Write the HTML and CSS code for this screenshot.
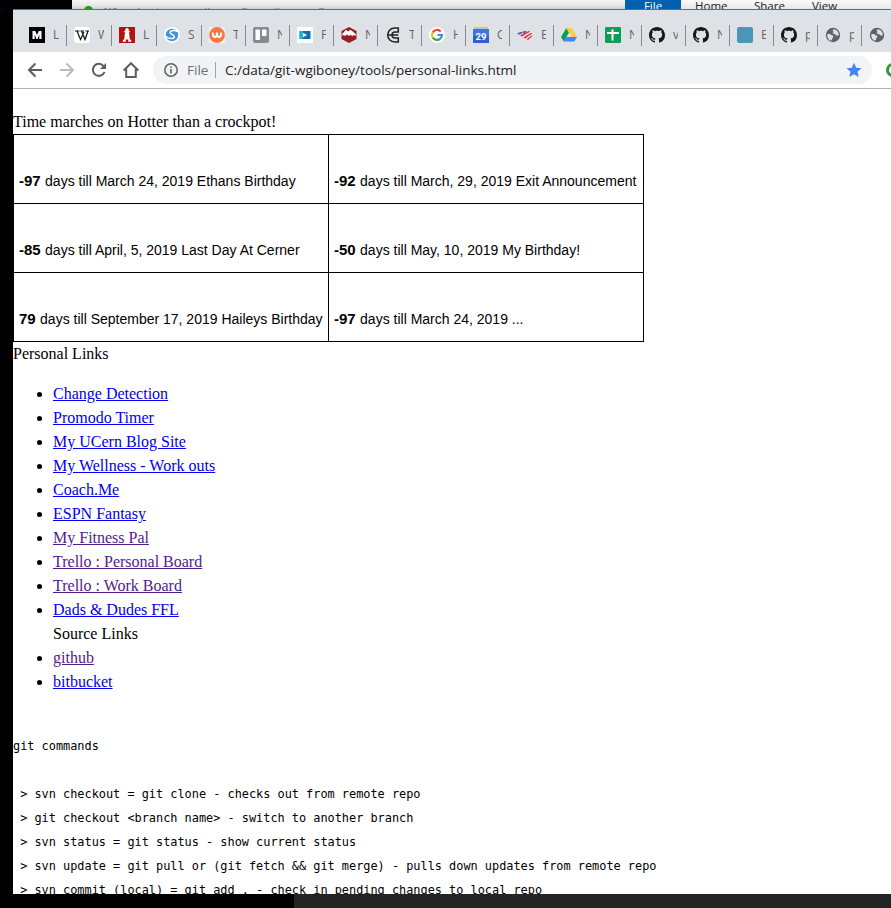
FILE: index.html
```
<!DOCTYPE html>
<html lang="en"><head><meta charset="utf-8"><title>Personal Links</title>
<link rel="stylesheet" href="styles.css"></head>
<body>
<svg class="defs" width="0" height="0"><defs>
<symbol id="gh" viewBox="0 0 16 16"><path fill="#171717" d="M8 0C3.58 0 0 3.58 0 8c0 3.54 2.29 6.53 5.47 7.59.4.07.55-.17.55-.38 0-.19-.01-.82-.01-1.49-2.01.37-2.53-.49-2.69-.94-.09-.23-.48-.94-.82-1.13-.28-.15-.68-.52-.01-.53.63-.01 1.08.58 1.23.82.72 1.21 1.87.87 2.33.66.07-.52.28-.87.51-1.07-1.78-.2-3.64-.89-3.64-3.95 0-.87.31-1.59.82-2.15-.08-.2-.36-1.02.08-2.12 0 0 .67-.21 2.2.82.64-.18 1.32-.27 2-.27s1.36.09 2 .27c1.53-1.04 2.2-.82 2.2-.82.44 1.1.16 1.92.08 2.12.51.56.82 1.27.82 2.15 0 3.07-1.87 3.75-3.65 3.95.29.25.54.73.54 1.48 0 1.07-.01 1.93-.01 2.2 0 .21.15.46.55.38A8.01 8.01 0 0 0 16 8c0-4.42-3.58-8-8-8z"/></symbol>
<symbol id="globe" viewBox="0 0 16 16"><circle cx="8" cy="8" r="7.2" fill="#5f6368"/><path fill="#dee1e6" d="M2.200 7.200C4 6.600 5.600 7 6.400 8.200c1 .2 2 .2 2 1.400 0 1-1 1.200-1.200 2.200-.1 1-.8 1.800-1.400 2C3.600 12.800 2 10.600 2.200 7.200zM8.800 2.200c-1.200.6-1.600 1.800-.6 2.200 1 .3.200 1.200-.6 1.400-.6.600.400 1 1.400 1 1.400 0 1.400 1.400 2.400 1.600.8.100 1.400.3 2.400-.2C13.900 5.200 11.800 2.500 8.800 2.200z"/></symbol>
</defs></svg>
<div class="backdrop">
  <div class="behind"><svg class="dot" width="260" height="9"><circle cx="5.500" cy="10.500" r="4.500" fill="#189a1b"/><path d="M21 8.500h3M26 8.500h2M30 8.500h4M55 8.500h2M74 8.500h1M122 8.500h1.500M125 8.500h1.500M159 8.500h5M192 8.500h1.500M195 8.500h1.500M236 8.500h5" stroke="#999" fill="none"/></svg></div>
  <div class="explorer"><span class="file">File</span><span class="m1">Home</span><span class="m2">Share</span><span class="m3">View</span></div>
</div>
<div class="window">
  <div class="tabs">
    <div class="tab wide"><svg viewBox="0 0 16 16"><path d="M0 0h16v16H0z"/><path d="M3.500 12V4h2.700L8 8l1.800-4h2.700v8h-2.200V7.500L8.600 12H7.400L5.700 7.500V12z" fill="#fff"/></svg><span>L</span></div>
    <div class="tab wide"><svg viewBox="0 0 16 16"><rect width="16" height="16" rx="3" fill="#fff"/><path d="M1 4h4.500M6.500 4H10M11.500 4H15M3 4l3.500 8.500L10 5M7.500 4l3.500 8.500L14 4" fill="none" stroke="#111" stroke-width="1.200"/></svg><span>W</span></div>
    <div class="tab wide"><svg viewBox="0 0 16 16"><path d="M0 0h16v16H0z" fill="#b5130f"/><path d="M8 .8L9.800 2.300V4h1v1.200H10l.8 7 1.400 1v1.600H9.200V12.500H6.800v2.300H3.800v-1.600l1.400-1 .8-7H5.200V4h1V2.300z" fill="#fff"/></svg><span>L</span></div>
    <div class="tab wide"><svg viewBox="0 0 16 16"><circle cx="8" cy="8" r="8" fill="#fff"/><circle cx="8" cy="8" r="6.200" fill="#3f94dc"/><path d="M14 4.500C10.500 2.800 6.500 3.400 6 5.300c-.5 2 4.600 2.200 4.300 4.600C10 12 5.500 12.500 2 9.500" fill="none" stroke="#fff" stroke-width="1.500"/></svg><span>S</span></div>
    <div class="tab"><svg viewBox="0 0 16 16"><path d="M0 0h16v16H0z" fill="#f7efeb"/><circle cx="8" cy="8" r="7.900" fill="#f57840"/><path d="M3.800 5.500c0 6 4.200 6 4.200 0 0 6 4.200 6 4.200 0" fill="none" stroke="#fff" stroke-width="2"/></svg><span>T</span></div>
    <div class="tab"><svg viewBox="0 0 16 16"><rect width="16" height="16" rx="2" fill="#838c91"/><rect x="2.500" y="2.500" width="4.500" height="10.500" rx=".7" fill="#fff"/><rect x="9" y="2.500" width="4.500" height="6.500" rx=".7" fill="#fff"/></svg><span>N</span></div>
    <div class="tab"><svg viewBox="0 0 16 16"><path d="M0 0h16v16H0z" fill="#fff"/><path d="M2.500 4h11v8h-11z" fill="#0a6fb0"/><path d="M2.500 4H6v8H2.500z" fill="#25b0d5"/><path d="M6 5.700l4 2.300-4 2.300z" fill="#fff"/></svg><span>F</span></div>
    <div class="tab"><svg viewBox="0 0 16 16"><path d="M8 0l7.500 4v8L8 16 .5 12V4z" fill="#991c1f"/><path d="M1.200 7L5 2.800 7 4.500l2.500-1.700L14.800 7v2l-2-1-1.500 1.300-1.800-1.500L8 9 6 7.500 4 9 2.800 8l-1.600.8z" fill="#fff"/></svg><span>N</span></div>
    <div class="tab"><svg viewBox="0 0 16 16"><path d="M13.300 1H10C.3 1 .3 15 10 15h3.300v-4H10c-4 0-4-6 0-6h3.300zM2.800 8h10.500" fill="none" stroke="#222" stroke-width="1.500"/></svg><span>T</span></div>
    <div class="tab"><svg viewBox="0 0 16 16"><circle cx="8" cy="8" r="8" fill="#fff"/><g fill="none" stroke-width="2.200"><path d="M3.700 5.500A5 5 0 0 1 11.700 4.500" stroke="#ea4335"/><path d="M3.700 10.500a5 5 0 0 1 0-5" stroke="#fbbc05"/><path d="M3.700 10.500a5 5 0 0 0 7.600 1.200" stroke="#34a853"/><path d="M11.300 11.700A5 5 0 0 0 13 8H8.500" stroke="#4285f4"/></g></svg><span>H</span></div>
    <div class="tab"><svg viewBox="0 0 16 16"><path d="M1 0h14v3H1z" fill="#c2c2c2"/><path d="M0 2h16v14H0z" fill="#3f76e4"/><path d="M0 9h16v7H0z" fill="#2d61cc"/><text x="8" y="12.500" class="date">29</text></svg><span>C</span></div>
    <div class="tab"><svg viewBox="0 0 16 16"><path d="M0 6.500l4-1.800 2 1-4 2zM5 5l3-1.300 2 1.100-3 1.400z" fill="#4e62a2"/><path d="M3 8.500c3-2 6-3.500 9-4.500l1.200.7C10 6 7.500 7.500 5 9.500zM6.500 10.500C9 8.500 11.500 7 14 6l1.300.8C12.500 8 10.500 9.500 8.500 11.500zM9.800 12.300c1.500-1.500 3-2.700 5-3.800l.8.600C14 10 12.500 11.500 11.200 13z" fill="#e3263f"/></svg><span>E</span></div>
    <div class="tab"><svg viewBox="0 0 16 16"><path d="M5.300 1L0 10l2.700 4.500L8 5.500z" fill="#0f9d58"/><path d="M5.300 1h5.400l5.300 9h-5.300z" fill="#ffcd40"/><path d="M5.300 10H16l-2.700 4.500H2.700z" fill="#4285f4"/></svg><span>N</span></div>
    <div class="tab"><svg viewBox="0 0 16 16"><rect width="16" height="16" rx="1" fill="#0f9d58"/><path d="M6.500 2.500h2V5H14v2H8.500v6.500h-2V7H2V5h4.500z" fill="#fff"/></svg><span>N</span></div>
    <div class="tab"><svg><use href="#gh"/></svg><span>v</span></div>
    <div class="tab"><svg><use href="#gh"/></svg><span>N</span></div>
    <div class="tab"><svg viewBox="0 0 16 16"><rect width="16" height="16" rx="2" fill="#4d95b5"/></svg><span>E</span></div>
    <div class="tab"><svg><use href="#gh"/></svg><span>p</span></div>
    <div class="tab"><svg><use href="#globe"/></svg><span>p</span></div>
    <div class="tab"><svg><use href="#globe"/></svg></div>
  </div>
  <div class="toolbar">
    <svg class="nav" viewBox="0 0 16 16"><path d="M15 8H2M8.500 1.500L2 8l6.500 6.500" stroke="#5a5e63"/></svg>
    <svg class="nav" viewBox="0 0 16 16"><path d="M1 8h13M7.500 1.500L14 8l-6.500 6.500" stroke="#b9bbbd"/></svg>
    <svg class="nav" viewBox="0 0 16 16"><path d="M13.500 10A6 6 0 1 1 12.500 4" stroke="#5a5e63"/><path d="M15 1v6H9z" fill="#5a5e63" stroke="none"/></svg>
    <svg class="nav" viewBox="0 0 16 16"><path d="M.7 8.500L8 1.200l7.300 7.300M3.200 7v8h9.600V7" stroke="#5a5e63"/></svg>
    <div class="omnibox">
      <svg class="info" viewBox="0 0 14 14"><circle cx="7" cy="7" r="6.200" fill="none" stroke="#5f6368" stroke-width="1.500"/><path d="M6.200 6h1.600v4.500H6.200zM6.200 3.500h1.600V5H6.200z" fill="#5f6368"/></svg>
      <span class="scheme">File</span><span class="url">C:/data/git-wgiboney/tools/personal-links.html</span>
      <svg class="star" viewBox="0 0 16 16"><path d="M8 .7l2.200 5 5.300.5-4 3.600 1.200 5.200L8 12.200 3.300 15l1.200-5.200-4-3.600 5.300-.5z" fill="#4285f4"/></svg>
    </div>
    <svg class="ext" viewBox="0 0 14 14"><circle cx="7" cy="7" r="5.500" fill="#fff" stroke="#3a9142" stroke-width="3"/></svg>
  </div>
  <main>
    <div class="line">Time marches on Hotter than a crockpot!</div>
    <table>
      <tr><td><b>-97</b> days till March 24, 2019 Ethans Birthday</td><td><b>-92</b> days till March, 29, 2019 Exit Announcement</td></tr>
      <tr><td><b>-85</b> days till April, 5, 2019 Last Day At Cerner</td><td><b>-50</b> days till May, 10, 2019 My Birthday!</td></tr>
      <tr><td><b>79</b> days till September 17, 2019 Haileys Birthday</td><td><b>-97</b> days till March 24, 2019 ...</td></tr>
    </table>
    <div class="line">Personal Links</div>
    <ul>
      <li><a>Change Detection</a></li>
      <li><a>Promodo Timer</a></li>
      <li><a>My UCern Blog Site</a></li>
      <li><a>My Wellness - Work outs</a></li>
      <li><a>Coach.Me</a></li>
      <li><a>ESPN Fantasy</a></li>
      <li><a class="seen">My Fitness Pal</a></li>
      <li><a class="seen">Trello : Personal Board</a></li>
      <li><a class="seen">Trello : Work Board</a></li>
      <li><a>Dads &amp; Dudes FFL</a></li>
      <li class="plain">Source Links</li>
      <li><a class="seen">github</a></li>
      <li><a>bitbucket</a></li>
    </ul>
<pre>git commands

 &gt; svn checkout = git clone - checks out from remote repo
 &gt; git checkout &lt;branch name&gt; - switch to another branch
 &gt; svn status = git status - show current status
 &gt; svn update = git pull or (git fetch &amp;&amp; git merge) - pulls down updates from remote repo
 &gt; svn commit (local) = git add . - check in pending changes to local repo</pre>
  </main>
</div>
<div class="desk"></div>
</body></html>
```
FILE: styles.css
```
* { box-sizing: border-box; }
html, body { margin: 0; height: 908px; overflow: hidden; }
body { background: #000; display: flex; flex-direction: column; }
.defs { position: absolute; }
.backdrop { height: 9px; display: flex; padding-left: 72px; flex: none; overflow: hidden; }
.behind { width: 553px; background: linear-gradient(#f6f6f6, #e8e8e8 60%, #cfcfcf); padding-left: 11px; }
.dot { display: block; }
.explorer { flex: 1; height: 9px; display: flex; background: linear-gradient(#fafafa, #e8e8e8); font: 11.500px/11px "Open Sans", sans-serif; color: #222; overflow: hidden; }
.explorer span { flex: none; height: 11px; }
.explorer .file { width: 56px; background: #0060b0; color: #fff; text-align: center; }
.m1 { margin-left: 14px; width: 59px; }
.m2 { width: 58px; }
.window { height: 885px; flex: none; margin-left: 13px; border-top: 1px solid #1e7fd0; background: #fff; overflow: hidden; display: flex; flex-direction: column; }
.tabs { height: 42px; flex: none; background: #dee1e6; display: flex; padding: 15px 0 0 9px; overflow: hidden; }
.tab { width: 44px; height: 21px; flex: none; border-right: 1px solid #85888c; padding: 2px 0 0 7px; display: flex; }
.tab.wide { width: 45px; }
.tab svg { width: 16px; height: 16px; flex: none; }
.tab span { margin-left: 8px; width: 5px; overflow: hidden; font: 12px/16px "Open Sans", sans-serif; color: #62656b; }
.tab.wide span { width: 6px; }
.date { font: bold 9.500px Roboto, sans-serif; fill: #fff; text-anchor: middle; }
.toolbar { height: 37px; flex: none; border-bottom: 1px solid #b3b3b3; display: flex; align-items: center; padding-left: 14px; }
.nav { width: 16px; height: 16px; margin-right: 16px; flex: none; }
.nav path { fill: none; stroke-width: 2; }
.nav path[stroke="none"] { fill: #5a5e63; }
.omnibox { width: 719px; height: 28px; margin-left: -2px; border-radius: 14px; background: #f1f3f4; display: flex; align-items: center; padding-left: 11px; font: 13.500px/20px "Open Sans", sans-serif; flex: none; }
.info { width: 14px; height: 14px; }
.scheme { margin-left: 9px; width: 29px; color: #6b6f74; border-right: 1px solid #a0a3a6; line-height: 16px; }
.url { margin-left: 9px; color: #202124; white-space: nowrap; }
.star { width: 16px; height: 16px; margin: 0 10px 0 auto; }
.ext { width: 14px; height: 14px; margin-left: 14px; flex: none; }
main { padding-top: 21px; font: 16px/24px "Liberation Serif", serif; color: #000; flex: 1; overflow: hidden; }
.line { height: 24px; }
table { border-collapse: collapse; table-layout: fixed; width: 631px; font: 14px/24px "Liberation Sans", sans-serif; }
td { border: 1px solid #000; height: 69px; padding: 24px 5px 10px; white-space: nowrap; vertical-align: bottom; }
td b { font-size: 15px; line-height: 20px; margin-right: .5px; }
ul { margin: 16px 0 0; padding-left: 40px; }
li.plain { list-style: none; }
a { color: #0000ee; text-decoration: underline; }
a.seen { color: #551a8b; }
pre { margin: 40px 0 0; font: 11.880px/24px "DejaVu Sans Mono", monospace; }
.desk { flex: 1; margin-left: 294px; background: #242424; }
```
